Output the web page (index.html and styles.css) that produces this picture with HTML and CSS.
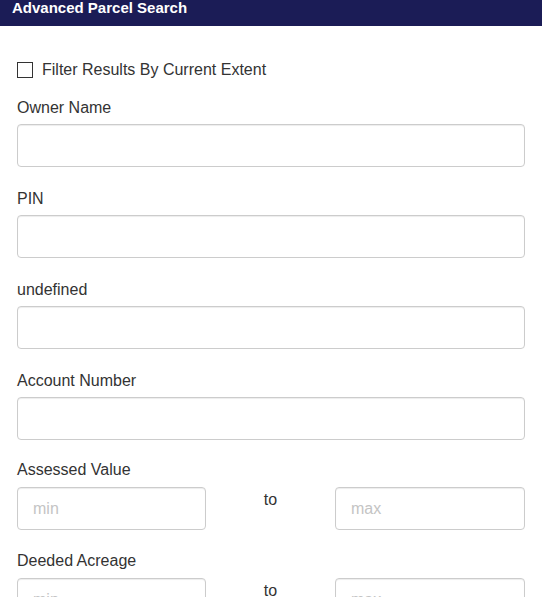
FILE: index.html
```
<!DOCTYPE html>
<html>
<head>
<meta charset="utf-8">
<link rel="stylesheet" href="styles.css">
</head>
<body>
<div class="header">Advanced Parcel Search</div>
<div class="content">
  <label class="check-row"><span class="check-box"></span><span>Filter Results By Current Extent</span></label>
  <div class="group">
    <div class="label">Owner Name</div>
    <input class="field" type="text">
  </div>
  <div class="group">
    <div class="label">PIN</div>
    <input class="field" type="text">
  </div>
  <div class="group">
    <div class="label">undefined</div>
    <input class="field" type="text">
  </div>
  <div class="group">
    <div class="label">Account Number</div>
    <input class="field" type="text">
  </div>
  <div class="group range-group">
    <div class="label">Assessed Value</div>
    <div class="range">
      <input class="field" type="text" placeholder="min">
      <div class="to">to</div>
      <input class="field" type="text" placeholder="max">
    </div>
  </div>
  <div class="group range-group">
    <div class="label">Deeded Acreage</div>
    <div class="range">
      <input class="field" type="text" placeholder="min">
      <div class="to">to</div>
      <input class="field" type="text" placeholder="max">
    </div>
  </div>
</div>
</body>
</html>
```
FILE: styles.css
```
html, body {
  margin: 0;
  padding: 0;
  background: #fff;
  overflow: hidden;
}
body {
  font-family: "Liberation Sans", Arial, sans-serif;
  color: #333;
  font-size: 16px;
}
.header {
  height: 26px;
  background: #1b1c56;
  color: #fff;
  font-weight: bold;
  font-size: 15px;
  line-height: 15px;
  padding-left: 12px;
  box-sizing: border-box;
}
.content {
  padding: 33px 17px 0 17px;
}
.check-row {
  display: flex;
  align-items: center;
  gap: 9px;
  line-height: 22px;
  margin-bottom: 13px;
}
.check-box {
  width: 16px;
  height: 16px;
  box-sizing: border-box;
  border: 1.5px solid #333;
  background: #fff;
  margin-top: 0;
}
.group {
  margin-bottom: 18px;
}
.label {
  line-height: 22px;
  padding-top: 3px;
  margin-bottom: 5px;
}
.range-group {
  margin-bottom: 19px;
}
.range-group .label {
  padding-top: 1px;
  margin-bottom: 6px;
}
.field {
  display: block;
  width: 100%;
  height: 43px;
  box-sizing: border-box;
  border: 1px solid #ccc;
  border-radius: 4px;
  box-shadow: inset 0 1px 1px rgba(0,0,0,0.075);
  padding: 0 15px;
  font-family: "Liberation Sans", Arial, sans-serif;
  font-size: 16px;
  color: #555;
  background: #fff;
  margin: 0;
  outline: none;
}
.field::placeholder {
  color: #c4c4c4;
}
.range {
  display: grid;
  grid-template-columns: 189px 1fr 190px;
}
.to {
  text-align: center;
  line-height: 22px;
  padding-top: 2px;
}
```
